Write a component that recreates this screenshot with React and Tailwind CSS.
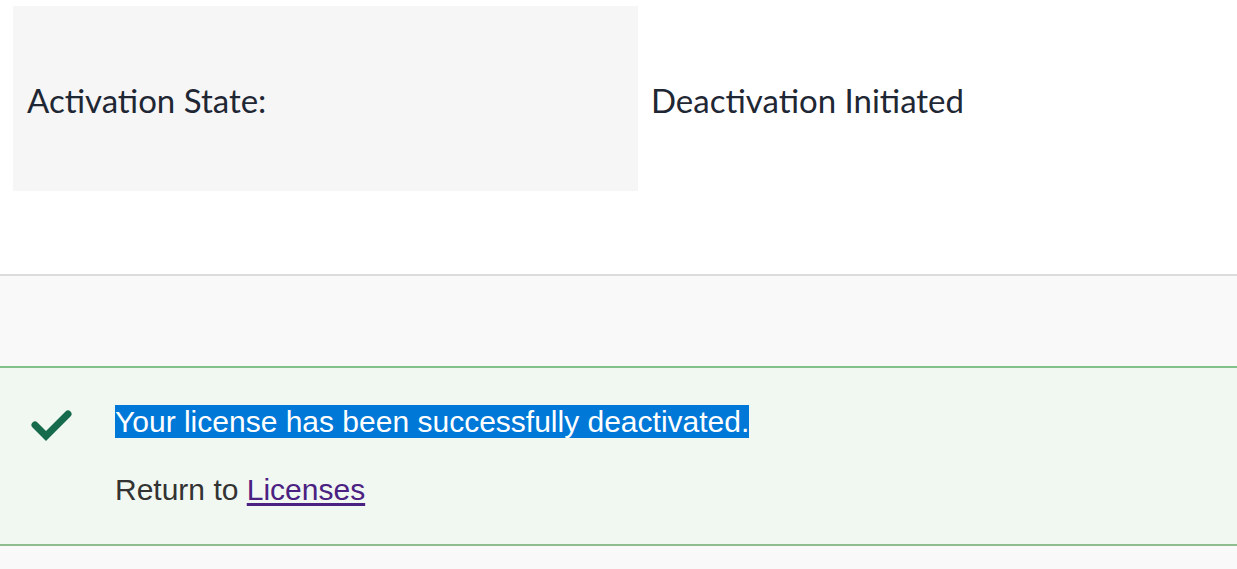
import React from 'react';

const CheckIcon = () => (
    <svg width="44" height="40" viewBox="0 0 44 40" className="shrink-0 mt-[1px]">
        <polyline
            points="5,20 16,31 38,9"
            fill="none"
            stroke="#176b4d"
            strokeWidth="7"
            strokeLinecap="round"
            strokeLinejoin="miter"
        />
    </svg>
);

const App = () => {
    return (
        <div className="min-h-[569px] bg-white">
            <div className="pt-[6px] pl-[13px] flex items-center">
                <div className="w-[625px] h-[185px] bg-[#f6f6f6] flex items-center pl-[14px] pt-[4px]">
                    <span className="text-[33px] text-[#1e2733]" style={{ fontFamily: 'Lato, "Open Sans", sans-serif' }}>
                        Activation State:
                    </span>
                </div>
                <span className="pl-[13px] pt-[4px] text-[33px] text-[#1e2733]" style={{ fontFamily: 'Lato, "Open Sans", sans-serif' }}>
                    Deactivation Initiated
                </span>
            </div>

            <div className="mt-[83px] border-t-2 border-[#dcdcdc] bg-[#f9f9f9]">
                <div className="h-[90px]"></div>
                <div
                    className="border-y-2 border-t-[#82c28a] border-b-[#8fbd8f] bg-[#f1f8f1] h-[180px] flex pl-[30px] pt-[36px]"
                    style={{ fontFamily: '"Liberation Sans", Arial, sans-serif' }}
                >
                    <CheckIcon />
                    <div className="pl-[41px] text-[30px] text-[#333]">
                        <p className="leading-[34px] pt-[1px]">
                            <span className="bg-[#0078d7] text-white">Your license has been successfully deactivated.</span>
                        </p>
                        <p className="mt-[34px] leading-[34px]">
                            Return to{' '}
                            <a href="#" className="text-[#4b2182] underline underline-offset-[3px]">Licenses</a>
                        </p>
                    </div>
                </div>
                <div className="h-[30px]"></div>
            </div>
        </div>
    );
};

export default App;
